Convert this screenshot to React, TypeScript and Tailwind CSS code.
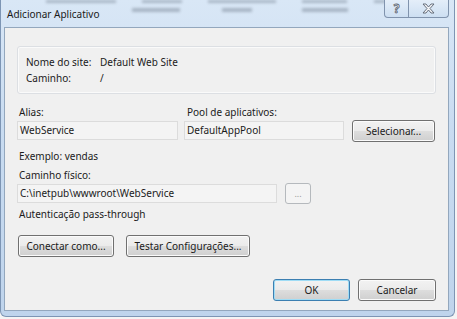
import React from "react";

function Btn({
  children,
  className = "",
  isDefault = false,
}: {
  children: React.ReactNode;
  className?: string;
  isDefault?: boolean;
}) {
  return (
    <div
      className={
        "flex items-center justify-center rounded-[3px] border text-[10px] text-[#1b1b1b] bg-[linear-gradient(#f2f2f2_0%,#ebebeb_48%,#dddddd_52%,#cfcfcf_100%)] " +
        (isDefault
          ? "border-[#3c7fb1] shadow-[inset_0_0_0_1px_#9fdcf5]"
          : "border-[#707070] shadow-[inset_0_0_0_1px_#fbfbfb]") +
        " " +
        className
      }
    >
      {children}
    </div>
  );
}

function TextBox({ value, className = "" }: { value: string; className?: string }) {
  return (
    <div
      className={
        "flex h-[19px] items-center border border-[#dcdcdc] bg-[#f4f4f4] pl-[2px] text-[10px] text-[#1b1b1b] " +
        className
      }
    >
      {value}
    </div>
  );
}

function Label({ children, className = "" }: { children: React.ReactNode; className?: string }) {
  return <div className={"h-[16px] leading-[16px] text-[10px] text-[#1b1b1b] " + className}>{children}</div>;
}

export default function App() {
  return (
    <div className="relative h-[319px] w-[457px] overflow-hidden bg-[#f4f4f4] font-['Noto_Sans',sans-serif]">
      <div className="flex h-[317px] w-[455px] flex-col rounded-b-[6px] border border-t-0 border-[#7d95b4] bg-[linear-gradient(#d9e7f6_0%,#c9dcf1_40%,#bfd4ec_100%)] pl-[3px] pr-[5px] pb-[5px]">
        {/* title bar */}
        <div className="relative flex h-[27px] shrink-0 items-center">
          <div className="pointer-events-none absolute inset-0 overflow-hidden opacity-30 blur-[1.5px]">
            <div className="absolute left-[42px] top-[0px] h-[3px] w-[70px] bg-[#3a4656]" />
            <div className="absolute left-[138px] top-[0px] h-[3px] w-[40px] bg-[#3a4656]" />
            <div className="absolute left-[204px] top-[0px] h-[3px] w-[68px] bg-[#3a4656]" />
            <div className="absolute left-[298px] top-[0px] h-[3px] w-[45px] bg-[#3a4656]" />
            <div className="absolute left-[370px] top-[0px] h-[3px] w-[12px] bg-[#3a4656]" />
            <div className="absolute left-[128px] top-[8px] h-[4px] w-[48px] bg-[#3a4656]" />
            <div className="absolute left-[218px] top-[8px] h-[4px] w-[30px] bg-[#3a4656]" />
            <div className="absolute left-[298px] top-[8px] h-[4px] w-[46px] bg-[#3a4656]" />
          </div>
          <span className="relative ml-[3px] mt-[2px] text-[10px] text-[#1a1a1a]">Adicionar Aplicativo</span>
          <div className="absolute right-0 top-0 flex h-[18px] overflow-hidden rounded-b-[4px] border border-t-0 border-[#8093ad] bg-[linear-gradient(#e4eef9,#cddff2)]">
            <div className="flex w-[24px] items-center justify-center border-r border-[#8093ad]">
              <span className="text-[12px] font-bold leading-none text-[#e9eef4] [-webkit-text-stroke:0.8px_#5c6470]">?</span>
            </div>
            <div className="flex w-[39px] items-center justify-center">
              <svg width="13" height="11" viewBox="0 0 13 11">
                <path
                  d="M1 1h3l2.5 3 2.5-3h3l-4 4.5 4 4.5h-3l-2.5-3-2.5 3h-3l4-4.5z"
                  fill="#f2f4f7"
                  stroke="#5a6270"
                  strokeWidth="0.9"
                  strokeLinejoin="round"
                />
              </svg>
            </div>
          </div>
        </div>

        {/* client */}
        <div className="flex flex-1 flex-col border border-[#93a7bd] bg-[#f0f0f0] px-[12px] pt-[18px]">
          <div className="h-[48px] rounded-[3px] border border-[#dcdfe3] pl-[8px] pt-[7px] shadow-[inset_0_0_0_1px_#fafafa]">
            <div className="flex">
              <Label className="w-[74px]">Nome do site:</Label>
              <Label>Default Web Site</Label>
            </div>
            <div className="flex">
              <Label className="w-[74px]">Caminho:</Label>
              <Label>/</Label>
            </div>
          </div>

          <div className="mt-[10px] flex">
            <Label className="w-[170px] pl-[2px]">Alias:</Label>
            <Label>Pool de aplicativos:</Label>
          </div>
          <div className="flex items-start">
            <TextBox value="WebService" className="mt-[1px] w-[161px]" />
            <TextBox value="DefaultAppPool" className="ml-[6px] mt-[1px] w-[160px]" />
            <Btn className="ml-[8px] h-[22px] w-[83px]">Selecionar...</Btn>
          </div>
          <Label className="mt-[6px] pl-[2px]">Exemplo: vendas</Label>
          <Label className="mt-[3px] pl-[2px]">Caminho físico:</Label>
          <div className="flex items-start">
            <TextBox value="C:\inetpub\wwwroot\WebService" className="mt-[1px] w-[260px]" />
            <div className="ml-[8px] flex h-[21px] w-[26px] items-center justify-center rounded-[3px] border border-[#b5b9bd] bg-[#f4f4f4] text-[9px] leading-none text-[#9a9a9a]">
              ...
            </div>
          </div>
          <Label className="mt-[2px] pl-[2px]">Autenticação pass-through</Label>
          <div className="ml-[1px] mt-[13px] flex">
            <Btn className="h-[22px] w-[96px]">Conectar como...</Btn>
            <Btn className="ml-[12px] h-[22px] w-[124px]">Testar Configurações...</Btn>
          </div>
          <div className="mt-[22px] flex justify-end">
            <Btn isDefault className="h-[22px] w-[77px]">
              OK
            </Btn>
            <Btn className="ml-[8px] h-[22px] w-[78px]">Cancelar</Btn>
          </div>
        </div>
      </div>
    </div>
  );
}
